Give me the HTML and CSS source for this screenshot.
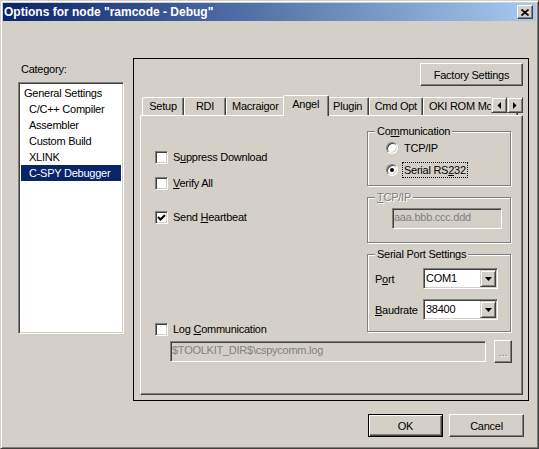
FILE: index.html
```html
<!DOCTYPE html>
<html lang="en">
<head>
<meta charset="UTF-8">
<meta name="viewport" content="width=device-width, initial-scale=1.0">
<title>Options for node "ramcode - Debug"</title>
<link rel="stylesheet" href="styles.css">
</head>
<body>
    <div class="window">
        <div class="titleBar">
            <span class="titleText">Options for node "ramcode - Debug"</span>
            <span class="closeButton">
                <svg width="8" height="7" viewBox="0 0 8 7"><path d="M0.5 0.5 L7.5 6.5 M7.5 0.5 L0.5 6.5" stroke="#000" stroke-width="1.7"/></svg>
            </span>
        </div>

        <div class="main">
            <div class="categoryColumn">
                <div class="categoryLabel">Category:</div>
                <div class="categoryList">
                    <div class="item">General Settings</div>
                    <div class="item child">C/C++ Compiler</div>
                    <div class="item child">Assembler</div>
                    <div class="item child">Custom Build</div>
                    <div class="item child">XLINK</div>
                    <div class="item child selected">C-SPY Debugger</div>
                </div>
            </div>

            <div class="optionsFrame">
                <div class="factoryRow">
                    <button class="btn factoryButton">Factory Settings</button>
                </div>

                <div class="tabControl">
                    <div class="tabStrip">
                        <div class="tab">Setup</div>
                        <div class="tab">RDI</div>
                        <div class="tab">Macraigor</div>
                        <div class="tab active">Angel</div>
                        <div class="tab">Plugin</div>
                        <div class="tab">Cmd Opt</div>
                        <div class="tab last">OKI ROM Monitor</div>
                        <div class="tabArrows">
                            <span class="arrowButton"><svg width="4" height="7" viewBox="0 0 4 7"><polygon points="4,0 4,7 0.5,3.5" fill="#000"/></svg></span>
                            <span class="arrowButton"><svg width="4" height="7" viewBox="0 0 4 7"><polygon points="0,0 0,7 3.5,3.5" fill="#000"/></svg></span>
                        </div>
                    </div>

                    <div class="tabPage">
                        <div class="pageTop">
                            <div class="leftCol">
                                <label class="checkRow first"><span class="checkbox"></span><span>S<u>u</u>ppress Download</span></label>
                                <label class="checkRow second"><span class="checkbox"></span><span><u>V</u>erify All</span></label>
                                <label class="checkRow third"><span class="checkbox checked"><svg width="11" height="11" viewBox="0 0 11 11"><polyline points="2,5 4.5,7.5 9,3" fill="none" stroke="#000" stroke-width="2.1"/></svg></span><span>Send <u>H</u>eartbeat</span></label>
                                <label class="checkRow logRow"><span class="checkbox"></span><span>Log <u>C</u>ommunication</span></label>
                            </div>

                            <div class="rightCol">
                                <div class="group commGroup">
                                    <div class="groupTitle">Co<u>m</u>munication</div>
                                    <div class="radioRow"><span class="radio"></span><span class="radioText">TCP/IP</span></div>
                                    <div class="radioRow"><span class="radio checked"></span><span class="radioText focused">Serial RS<u>2</u>32</span></div>
                                </div>

                                <div class="group tcpGroup">
                                    <div class="groupTitle disabled"><u>T</u>CP/IP</div>
                                    <div class="field disabledField ipField">aaa.bbb.ccc.ddd</div>
                                </div>

                                <div class="group serialGroup">
                                    <div class="groupTitle">Serial Port Settings</div>
                                    <div class="comboRow first">
                                        <span class="comboLabel">P<u>o</u>rt</span>
                                        <div class="combo">
                                            <span class="comboText">COM1</span>
                                            <span class="comboButton"><svg width="7" height="4" viewBox="0 0 7 4"><polygon points="0,0 7,0 3.5,4" fill="#000"/></svg></span>
                                        </div>
                                    </div>
                                    <div class="comboRow second">
                                        <span class="comboLabel"><u>B</u>audrate</span>
                                        <div class="combo">
                                            <span class="comboText">38400</span>
                                            <span class="comboButton"><svg width="7" height="4" viewBox="0 0 7 4"><polygon points="0,0 7,0 3.5,4" fill="#000"/></svg></span>
                                        </div>
                                    </div>
                                </div>
                            </div>
                        </div>

                        <div class="pathRow">
                            <div class="field disabledField pathField">$TOOLKIT_DIR$\cspycomm.log</div>
                            <button class="btn browseButton">...</button>
                        </div>
                    </div>
                </div>
            </div>
        </div>

        <div class="footer">
            <button class="btn dialogButton default">OK</button>
            <button class="btn dialogButton">Cancel</button>
        </div>
    </div>
</body>
</html>
```

FILE: styles.css
```css
* {
    box-sizing: border-box;
}

body {
    margin: 0;
    background-color: #d4d0c8;
    font-family: "Liberation Sans", Arial, sans-serif;
    font-size: 11px;
    letter-spacing: -0.25px;
    color: #000;
}

u {
    text-decoration: underline;
    text-underline-offset: 1px;
}

/* window frame */
.window {
    width: 539px;
    height: 449px;
    padding: 2px;
    background-color: #d4d0c8;
    border: 1px solid;
    border-color: #d4d0c8 #404040 #404040 #d4d0c8;
    box-shadow: inset 1px 1px #fff, inset -1px -1px #808080;
    display: flex;
    flex-direction: column;
}

.titleBar {
    height: 18px;
    display: flex;
    align-items: center;
    justify-content: space-between;
    padding: 0 3px 0 1px;
    background: linear-gradient(to right, #0a246a, #a6caf0);
}

.titleText {
    color: #fff;
    font-weight: bold;
    font-size: 12px;
    letter-spacing: 0;
}

.closeButton {
    width: 16px;
    height: 14px;
    display: flex;
    align-items: center;
    justify-content: center;
    background-color: #d4d0c8;
    border: 1px solid;
    border-color: #fff #404040 #404040 #fff;
    box-shadow: inset -1px -1px #808080;
}

.closeButton svg {
    display: block;
}

/* main area */
.main {
    display: flex;
    padding: 37px 0 0 15px;
}

.categoryColumn {
    width: 106px;
    margin-right: 9px;
}

.categoryLabel {
    margin-top: 4px;
    padding-left: 3px;
    line-height: 14px;
}

.categoryList {
    margin-top: 6px;
    height: 252px;
    padding: 2px;
    background-color: #fff;
    border: 1px solid;
    border-color: #808080 #fff #fff #808080;
    box-shadow: inset 1px 1px #404040, inset -1px -1px #d4d0c8;
}

.item {
    height: 16px;
    line-height: 16px;
    padding-left: 3px;
    white-space: nowrap;
}

.item.child {
    padding-left: 8px;
}

.item.selected {
    background-color: #0a246a;
    color: #fff;
}

.optionsFrame {
    width: 396px;
    height: 343px;
    border: 1px solid #000;
    padding: 4px 5px 0 6px;
}

.factoryRow {
    display: flex;
    justify-content: flex-end;
}

/* buttons */
.btn {
    font: inherit;
    letter-spacing: inherit;
    color: #000;
    padding: 0;
    background-color: #d4d0c8;
    border: 1px solid;
    border-color: #fff #404040 #404040 #fff;
    box-shadow: inset -1px -1px #808080;
    border-radius: 0;
}

.factoryButton {
    width: 103px;
    height: 23px;
}

.browseButton {
    width: 18px;
    height: 23px;
    color: #808080;
    text-shadow: 1px 1px #fff;
    line-height: 14px;
}

.dialogButton {
    width: 75px;
    height: 23px;
}

.dialogButton.default {
    border-color: #000;
    box-shadow: inset 1px 1px #fff, inset -1px -1px #404040, inset -2px -2px #808080;
}

/* tabs */
.tabControl {
    margin-top: 9px;
}

.tabStrip {
    position: relative;
    height: 20px;
    display: flex;
    align-items: flex-end;
    padding-left: 2px;
}

.tab {
    height: 18px;
    min-width: 42px;
    padding: 0 5px;
    line-height: 16px;
    text-align: center;
    white-space: nowrap;
    border-top: 1px solid #fff;
    border-left: 1px solid #fff;
    border-right: 1px solid #404040;
    box-shadow: inset -1px 0 #808080;
    border-radius: 2px 2px 0 0;
}

.tab.active {
    position: relative;
    z-index: 1;
    height: 21px;
    min-width: 46px;
    padding: 0 7px;
    margin: 0 -2px -1px;
    line-height: 17px;
    background-color: #d4d0c8;
}

.tab.last {
    width: 95px;
    overflow: hidden;
    text-align: left;
}

.tabArrows {
    position: absolute;
    right: 0;
    top: 2px;
    display: flex;
    z-index: 2;
}

.arrowButton {
    width: 16px;
    height: 16px;
    display: flex;
    align-items: center;
    justify-content: center;
    background-color: #d4d0c8;
    border: 1px solid;
    border-color: #d4d0c8 #404040 #404040 #d4d0c8;
    box-shadow: inset 1px 1px #fff, inset -1px -1px #808080;
}

.arrowButton svg {
    display: block;
}

.tabPage {
    height: 280px;
    border-top: 1px solid #fff;
    border-left: 1px solid #fff;
    border-right: 1px solid #404040;
    border-bottom: 1px solid #404040;
    box-shadow: inset -1px -1px #808080;
}

.pageTop {
    display: flex;
}

.leftCol {
    flex: 1;
    display: flex;
    flex-direction: column;
    padding-left: 14px;
}

.checkRow {
    height: 16px;
    display: flex;
    align-items: center;
    white-space: nowrap;
}

.checkRow.first {
    margin-top: 33px;
}

.checkRow.second {
    margin-top: 10px;
}

.checkRow.third {
    margin-top: 18px;
}

.checkRow.logRow {
    margin-top: 96px;
}

.checkbox {
    width: 13px;
    height: 13px;
    margin-right: 5px;
    flex-shrink: 0;
    background-color: #fff;
    border: 1px solid;
    border-color: #808080 #fff #fff #808080;
    box-shadow: inset 1px 1px #404040, inset -1px -1px #d4d0c8;
}

.checkbox svg {
    display: block;
}

.rightCol {
    width: 144px;
    margin-right: 11px;
    padding-top: 15px;
}

/* group boxes */
.group {
    border: 1px solid #808080;
    box-shadow: inset 1px 1px #fff, 1px 1px #fff;
}

.groupTitle {
    width: fit-content;
    margin: -8px 0 0 7px;
    padding: 0 2px;
    line-height: 14px;
    background-color: #d4d0c8;
}

.groupTitle.disabled {
    color: #808080;
    text-shadow: 1px 1px #fff;
}

.tcpGroup,
.serialGroup {
    margin-top: 11px;
}

.commGroup {
    padding-bottom: 5px;
}

.radioRow {
    height: 20px;
    display: flex;
    align-items: center;
    padding-left: 18px;
}

.radioRow + .radioRow {
    margin-top: 2px;
}

.radio {
    width: 12px;
    height: 12px;
    margin-right: 4px;
    border-radius: 50%;
    background-color: #fff;
    border: 1px solid;
    border-color: #808080 #fff #fff #808080;
    box-shadow: inset 1px 1px #404040, inset -1px -1px #d4d0c8;
    display: flex;
    align-items: center;
    justify-content: center;
}

.radio.checked::after {
    content: "";
    width: 4px;
    height: 4px;
    border-radius: 50%;
    background-color: #000;
}

.radioText {
    padding: 0 1px;
    line-height: 14px;
    border: 1px solid transparent;
}

.radioText.focused {
    border: 1px dotted #000;
}

/* text fields */
.field {
    height: 21px;
    padding-left: 1px;
    line-height: 17px;
    white-space: nowrap;
    overflow: hidden;
    border: 1px solid;
    border-color: #808080 #fff #fff #808080;
    box-shadow: inset 1px 1px #404040, inset -1px -1px #d4d0c8;
}

.disabledField {
    background-color: #d4d0c8;
    color: #808080;
}

.ipField {
    width: 110px;
    margin: 4px 0 13px 24px;
}

.comboRow {
    display: flex;
    align-items: center;
}

.comboRow.first {
    margin-top: 7px;
}

.comboRow.second {
    margin-top: 10px;
    margin-bottom: 11px;
}

.comboLabel {
    width: 55px;
    padding-left: 7px;
}

.combo {
    width: 75px;
    height: 21px;
    display: flex;
    background-color: #fff;
    border: 1px solid;
    border-color: #808080 #fff #fff #808080;
    box-shadow: inset 1px 1px #404040, inset -1px -1px #d4d0c8;
    padding: 1px;
}

.comboText {
    flex: 1;
    padding-left: 1px;
    line-height: 17px;
}

.comboButton {
    width: 16px;
    height: 17px;
    display: flex;
    align-items: center;
    justify-content: center;
    background-color: #d4d0c8;
    border: 1px solid;
    border-color: #d4d0c8 #404040 #404040 #d4d0c8;
    box-shadow: inset 1px 1px #fff, inset -1px -1px #808080;
}

.comboButton svg {
    display: block;
}

.pathRow {
    display: flex;
    align-items: center;
    margin-top: 3px;
    padding-left: 29px;
}

.pathField {
    width: 316px;
    margin-right: 8px;
}

/* bottom buttons */
.footer {
    display: flex;
    justify-content: flex-end;
    gap: 6px;
    padding: 13px 12px 0 0;
}
```
